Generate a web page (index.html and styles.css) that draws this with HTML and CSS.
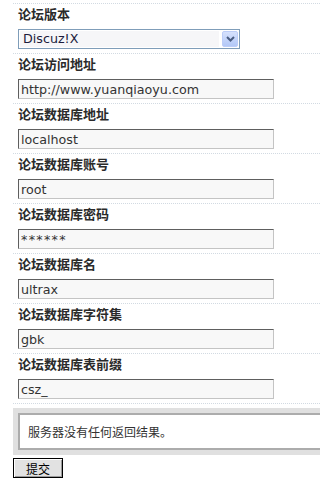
FILE: index.html
```html
<!DOCTYPE html>
<html lang="zh-CN">
<head>
<meta charset="utf-8">
<title>论坛设置</title>
<link rel="stylesheet" href="styles.css">
</head>
<body>
<div class="form">
  <div class="row">
    <div class="label">论坛版本</div>
    <div class="select">
      <span class="sel-text">Discuz!X</span>
      <span class="sel-btn"><svg width="9" height="6" viewBox="0 0 9 6"><path d="M1 1 L4.5 4.5 L8 1" fill="none" stroke="#4a5d82" stroke-width="2"/></svg></span>
    </div>
  </div>
  <div class="row">
    <div class="label">论坛访问地址</div>
    <input class="field" type="text" value="http://www.yuanqiaoyu.com">
  </div>
  <div class="row">
    <div class="label">论坛数据库地址</div>
    <input class="field" type="text" value="localhost">
  </div>
  <div class="row">
    <div class="label">论坛数据库账号</div>
    <input class="field" type="text" value="root">
  </div>
  <div class="row">
    <div class="label">论坛数据库密码</div>
    <input class="field field-secret" type="text" value="******">
  </div>
  <div class="row">
    <div class="label">论坛数据库名</div>
    <input class="field" type="text" value="ultrax">
  </div>
  <div class="row">
    <div class="label">论坛数据库字符集</div>
    <input class="field" type="text" value="gbk">
  </div>
  <div class="row">
    <div class="label">论坛数据库表前缀</div>
    <input class="field" type="text" value="csz_">
  </div>
  <div class="result">
    <div class="result-box">
      <div class="result-msg">服务器没有任何返回结果。</div>
    </div>
  </div>
  <button class="submit" type="button">提交</button>
</div>
</body>
</html>
```
FILE: styles.css
```css
html, body {
  margin: 0;
  padding: 0;
  background: #fff;
  overflow: hidden;
}
body {
  font-family: "Noto Sans CJK SC", "DejaVu Sans", sans-serif;
  color: #333;
}
.form {
  padding: 3px 0 0 13px;
  overflow: hidden;
}
.row {
  border-top: 1px dotted #d2dae2;
  padding: 2px 5px 4px 5px;
  height: 43px;
}
.label {
  font-family: "Noto Sans CJK SC", sans-serif;
  font-weight: bold;
  font-size: 13px;
  line-height: 16px;
  height: 16px;
  color: #2a2a2a;
  margin-bottom: 7px;
}
.field {
  display: block;
  box-sizing: border-box;
  width: 256px;
  height: 20px;
  margin: 0;
  padding: 0 2px;
  border: 1px solid;
  border-color: #5e5e5e #c4c4c4 #c4c4c4 #5e5e5e;
  background: #f8f8f8;
  font-family: "DejaVu Sans", sans-serif;
  font-size: 12.7px;
  color: #333;
  outline: none;
}
.field-secret {
  letter-spacing: 1.3px;
}
.select {
  box-sizing: border-box;
  width: 222px;
  height: 20px;
  border: 1px solid #7f9db9;
  background: #fff;
  display: flex;
  align-items: center;
  padding: 1px;
}
.sel-text {
  flex: 1;
  height: 16px;
  line-height: 16px;
  padding-left: 3px;
  background: #f6f6f8;
  font-family: "DejaVu Sans", sans-serif;
  font-size: 12.7px;
  color: #1c1c3c;
  margin-right: 3px;
}
.sel-btn {
  box-sizing: border-box;
  width: 16px;
  height: 16px;
  border: 1px solid #bccdf8;
  border-radius: 2px;
  background: linear-gradient(#d6e1fd, #b3c8f7);
  display: flex;
  align-items: center;
  justify-content: center;
}
.result {
  border-top: 1px dotted #d2dae2;
  padding-top: 4px;
  overflow: hidden;
}
.result-box {
  width: 320px;
  background: #e0e0e0;
  padding: 5px;
}
.result-msg {
  border: 2px solid #acacac;
  background: #fff;
  height: 33px;
  line-height: 33px;
  padding: 0 8px;
  font-size: 12px;
  color: #333;
}
.submit {
  display: block;
  margin-top: 3px;
  width: 50px;
  height: 20px;
  padding: 0;
  border: 1px solid #000;
  background: #e2e2e2;
  box-shadow: inset 1px 1px 0 #fff, inset -1px -1px 0 #9a9a9a;
  font-family: "Noto Sans CJK SC", sans-serif;
  font-size: 12px;
  color: #000;
}
```
